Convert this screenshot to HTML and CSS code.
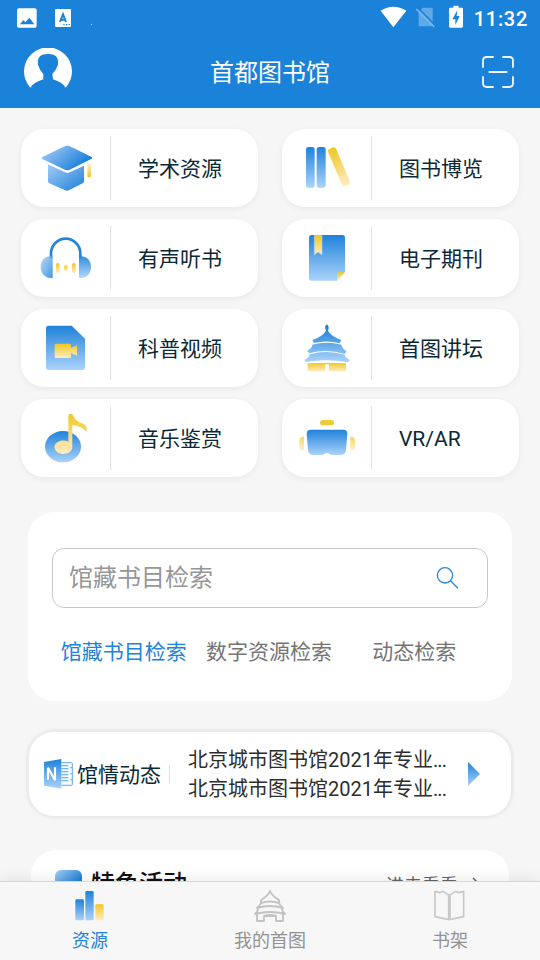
FILE: index.html
```html
<!DOCTYPE html>
<html lang="zh-CN">
<head>
<meta charset="utf-8">
<title>首都图书馆</title>
<link rel="stylesheet" href="styles.css">
</head>
<body>
<svg class="defs" width="0" height="0" aria-hidden="true">
  <defs>
    <linearGradient id="blue" x1="0" y1="0" x2="0" y2="1"><stop offset="0" stop-color="#1f82d9"/><stop offset="1" stop-color="#aad3fb"/></linearGradient>
    <linearGradient id="blueDiag" x1="0" y1="0" x2="1" y2="1"><stop offset="0" stop-color="#a3ccf6"/><stop offset="1" stop-color="#1c80d9"/></linearGradient>
    <linearGradient id="capTop" gradientUnits="userSpaceOnUse" x1="125" y1="85" x2="190" y2="160"><stop offset="0" stop-color="#8fc0f3"/><stop offset="1" stop-color="#1c80d9"/></linearGradient>
    <linearGradient id="gold" x1="0" y1="0" x2="0" y2="1"><stop offset="0" stop-color="#f0c722"/><stop offset="1" stop-color="#ffebc4"/></linearGradient>
    <linearGradient id="goldUp" x1="0" y1="0" x2="0" y2="1"><stop offset="0" stop-color="#fff0cf"/><stop offset="1" stop-color="#edc62c"/></linearGradient>
    <linearGradient id="temple" gradientUnits="userSpaceOnUse" x1="0" y1="85" x2="0" y2="190"><stop offset="0" stop-color="#1f82d9"/><stop offset="1" stop-color="#b2d7fb"/></linearGradient>
  </defs>
</svg>

<div class="app">
  <header class="header">
    <div class="status">
      <svg class="status-left" width="80" height="22" viewBox="48 21 240 66">
        <rect x="51" y="25" width="59" height="58" rx="6" fill="#fff"/>
        <path d="M60 73 70 60 76 67 88 53 103 73Z" fill="#1b82da"/>
        <rect x="165" y="27" width="48" height="54" rx="3" fill="#fff"/>
        <path d="M180 66 189 43 198 66M183 59H195" fill="none" stroke="#1b82da" stroke-width="6"/>
        <path d="M190 74h4M198 74h4M206 74h4" stroke="#1b82da" stroke-width="4"/>
        <circle cx="275" cy="73" r="2" fill="#b8dcf7"/>
      </svg>
      <svg class="status-right" width="84" height="24" viewBox="330 16 252 72">
        <path d="M332 33Q370 9 409 33L370 83Z" fill="#fff"/>
        <path d="M458 24H485Q488 24 488 28V80H446V38Z" fill="#5fa9e6"/>
        <path d="M443 24 498 79" stroke="#1b82da" stroke-width="5"/>
        <path d="M439 28 493 82" stroke="#7cb8ea" stroke-width="4.500"/>
        <path d="M540 24H550V18H566V24H576Q579 24 579 28V80Q579 84 575 84H541Q537 84 537 80V28Q537 24 540 24Z" fill="#fff"/>
        <path d="M562 32 547 59H556V76L569 49H560Z" fill="#1b82da"/>
      </svg>
      <span class="clock">11:32</span>
    </div>
    <div class="title-bar">
      <svg width="48" height="48" viewBox="72 144 144 144">
        <path d="M91 263A72 72 0 1 1 197 263Q187 247 159 238L157 222Q168 211 174 194C176 175 170 162 144 162S112 175 114 194Q119 211 130 222V238Q101 247 91 263Z" fill="#fff"/>
      </svg>
      <h1>首都图书馆</h1>
      <svg width="34" height="34" viewBox="633 165 102 102" fill="none" stroke="#eef8ff" stroke-width="5.500" stroke-linecap="round">
        <path d="M639 201V182Q639 171 650 171H669M699 171H718Q729 171 729 182V201M729 231V250Q729 261 718 261H699M669 261H650Q639 261 639 250V231M658 216H710"/>
      </svg>
    </div>
  </header>

  <main class="content">
    <nav class="grid">
      <a class="tile">
        <svg class="tile-icon" viewBox="33 27 267 234">
          <path d="M97 111 166 78Q172 75 178 78L245 111Q248 113 245 116L179 149Q172 153 165 149L97 117Q94 114 97 111Z" fill="url(#capTop)"/>
          <path d="M114 133 165 157Q172 161 179 157L222 137V184Q222 188 218 190L178 210Q171 214 164 210L118 190Q114 188 114 184Z" fill="url(#blueDiag)"/>
          <rect x="232" y="130" width="11" height="42" rx="5" fill="url(#goldUp)"/>
        </svg>
        <span class="tile-label">学术资源</span>
      </a>
      <a class="tile">
        <svg class="tile-icon" viewBox="36 27 267 234">
          <rect x="108" y="81" width="26" height="122" rx="8" fill="url(#blue)"/>
          <rect x="140" y="81" width="27" height="122" rx="8" fill="url(#blue)"/>
          <rect x="194" y="80" width="26" height="121" rx="8" fill="url(#gold)" transform="rotate(-23 207 140)"/>
        </svg>
        <span class="tile-label">图书博览</span>
      </a>
      <a class="tile">
        <svg class="tile-icon" viewBox="33 297 267 234">
          <path d="M123 415V400A44 44 0 0 1 211 400V415" fill="none" stroke="#2583d8" stroke-width="8"/>
          <path d="M128 409V474H123C103 474 92 459 92 441S103 409 123 409Z" fill="url(#blueDiag)" opacity=".8"/>
          <path d="M207 409V474H212C232 474 243 459 243 441S232 409 212 409Z" fill="url(#blue)" opacity=".9"/>
          <rect x="138" y="429" width="11" height="30" rx="5" fill="url(#gold)"/>
          <rect x="162" y="436" width="11" height="17" rx="5" fill="url(#gold)"/>
          <rect x="186" y="429" width="11" height="30" rx="5" fill="url(#gold)"/>
        </svg>
        <span class="tile-label">有声听书</span>
      </a>
      <a class="tile">
        <svg class="tile-icon" viewBox="36 297 267 234">
          <path d="M125 345H217Q225 345 225 353V456L201 482H125Q117 482 117 474V353Q117 345 125 345Z" fill="url(#blue)"/>
          <path d="M133 346H156V404L144 396 133 404Z" fill="url(#gold)" stroke="#b5d8f7" stroke-width="1.500"/>
          <path d="M202 457H225L202 481Z" fill="url(#gold)"/>
        </svg>
        <span class="tile-label">电子期刊</span>
      </a>
      <a class="tile">
        <svg class="tile-icon" viewBox="33 27 267 234">
          <path d="M116 77H185L225 116V202Q225 210 217 210H116Q108 210 108 202V85Q108 77 116 77Z" fill="url(#blue)"/>
          <path d="M138 131H179Q183 131 183 135V143L201 136V167L183 160V170Q183 174 179 174H138Q134 174 134 170V135Q134 131 138 131Z" fill="url(#gold)"/>
        </svg>
        <span class="tile-label">科普视频</span>
      </a>
      <a class="tile">
        <svg class="tile-icon" viewBox="36 27 267 234">
          <g fill="url(#temple)">
            <path d="M168 92Q163 80 168 74H173Q178 80 174 92Q181 107 214 120L209 130Q171 119 132 129L127 120Q157 110 168 92Z"/>
            <path d="M127 134Q170 122 214 134Q215 143 230 154L224 162Q171 145 118 160L111 153Q127 144 127 134Z"/>
            <path d="M119 163Q171 149 224 164Q225 172 240 180L234 187Q171 175 108 186L103 180Q118 173 119 163Z"/>
          </g>
          <path d="M113 190Q171 186 228 190V214H177V193H166V214H113Z" fill="url(#gold)"/>
        </svg>
        <span class="tile-label">首图讲坛</span>
      </a>
      <a class="tile">
        <svg class="tile-icon" viewBox="33 297 267 234">
          <ellipse cx="159" cy="440" rx="54" ry="47" fill="url(#blue)"/>
          <path d="M175 350Q175 341 182 341Q188 341 191 350Q198 364 217 370Q233 376 230 396Q214 378 187 375V442A27 20 0 1 1 175 425Z" fill="url(#gold)"/>
        </svg>
        <span class="tile-label">音乐鉴赏</span>
      </a>
      <a class="tile">
        <svg class="tile-icon" viewBox="36 297 267 234">
          <rect x="150" y="360" width="42" height="16" rx="8" fill="#eccb3c"/>
          <path d="M122 389H220Q232 389 232 401L228 450Q226 465 211 465H189Q182 465 178 461Q171 457 164 461Q160 465 153 465H130Q116 465 114 450L110 401Q110 389 122 389Z" fill="url(#blue)"/>
          <path d="M102 410V451Q88 452 88 444V421Q88 410 102 410Z" fill="url(#gold)" opacity=".75"/>
          <path d="M241 410Q255 410 255 421V444Q255 452 241 451Z" fill="url(#gold)" opacity=".75"/>
        </svg>
        <span class="tile-label">VR/AR</span>
      </a>
    </nav>

    <section class="search">
      <div class="search-box">
        <span>馆藏书目检索</span>
        <svg width="24" height="24" viewBox="498 198 72 72" fill="none" stroke="#2b86d8" stroke-width="4">
          <circle cx="525" cy="226" r="23"/><path d="M541 242 564 265"/>
        </svg>
      </div>
      <div class="search-tabs">
        <span class="search-tab active">馆藏书目检索</span>
        <span class="search-tab">数字资源检索</span>
        <span class="search-tab">动态检索</span>
      </div>
    </section>

    <section class="news">
      <svg width="30" height="30" viewBox="102 119 90 90">
        <path d="M154 130H184Q187 130 187 133V195Q187 198 184 198H154" fill="#f4faff" stroke="#66a9e6" stroke-width="3"/>
        <path d="M154 139H175M154 148H175M154 157H175M154 166H175M154 175H175M154 184H175M181 145H189M181 163H189M181 181H189" stroke="#73b4ee" stroke-width="3.500"/>
        <path d="M102 128 154 119V208L102 199Z" fill="url(#blue)"/>
        <path d="M114 181V145L135 183V144" fill="none" stroke="#fff" stroke-width="6.500"/>
      </svg>
      <h2>馆情动态</h2>
      <div class="news-list">
        <p>北京城市图书馆2021年专业<span class="dots">...</span></p>
        <p>北京城市图书馆2021年专业<span class="dots">...</span></p>
      </div>
      <svg width="12" height="24" viewBox="0 0 12 24"><path d="M0 0 12 12 0 24Z" fill="url(#blue)"/></svg>
    </section>

    <section class="events">
      <span class="events-icon"></span>
      <h2>特色活动</h2>
      <span class="events-more">进去看看</span>
      <svg width="8" height="14" viewBox="0 0 8 14" fill="none" stroke="#666" stroke-width="1.500"><path d="M1 1 7 7 1 13"/></svg>
    </section>
  </main>

  <footer class="tabbar">
    <a class="tab active">
      <svg width="34" height="34" viewBox="219 147 102 102">
        <rect x="226" y="178" width="26" height="63" rx="4" fill="url(#blue)"/>
        <rect x="256" y="153" width="25" height="88" rx="4" fill="url(#blue)"/>
        <rect x="286" y="193" width="25" height="48" rx="4" fill="url(#gold)"/>
      </svg>
      <span>资源</span>
    </a>
    <a class="tab">
      <svg width="34" height="34" viewBox="0 0 34 34" fill="none" stroke="#c3c3c3" stroke-width="1.900" stroke-linejoin="round">
        <path d="M17 2Q15 7 8 11V14Q17 11 26 14V11Q19 7 17 2ZM8 14Q7 17 4 19Q17 15 30 19Q27 17 26 14M5 19Q5 23 2 25Q17 21 32 25Q29 23 29 19M4 25V32H11V27H23V32H30V25M11 27Q17 25 23 27"/>
      </svg>
      <span>我的首图</span>
    </a>
    <a class="tab">
      <svg width="34" height="34" viewBox="489 147 102 102" fill="none" stroke="#c8c8c8" stroke-width="5" stroke-linejoin="round">
        <path d="M538 166 519 154 509 158 495 154V230L520 235 538 239 556 235 581 230V154L567 158 557 154Z"/>
        <path d="M538 164V239" stroke-width="9"/>
      </svg>
      <span>书架</span>
    </a>
  </footer>
</div>
</body>
</html>
```

FILE: styles.css
```css
* { box-sizing: border-box; }

body {
  margin: 0;
  background: #f6f6f6;
  font-family: Roboto, "Noto Sans CJK SC", sans-serif;
  color: #0b2836;
}

h1, h2, p { margin: 0; font-weight: 400; }
svg { display: block; flex: none; }
.defs { position: absolute; }

.app {
  display: flex;
  flex-direction: column;
  width: 540px;
  height: 960px;
  overflow: hidden;
}

.header { flex: none; height: 108px; background: #1b82da; color: #fff; }

.status {
  display: flex;
  align-items: center;
  height: 36px;
  padding: 0 13px 0 16px;
}
.status-right { margin-left: auto; margin-right: 10px; margin-top: -2px; }
.clock { font-size: 20px; font-weight: 500; letter-spacing: 0.7px; line-height: 36px; margin-right: -1px; padding-top: 2px; }

.title-bar {
  display: flex;
  align-items: center;
  justify-content: space-between;
  height: 72px;
  padding: 0 25px 0 24px;
}
.title-bar h1 { font-size: 24px; line-height: 36px; padding-top: 2px; margin-left: -13px; }

.content {
  flex: 1;
  min-height: 0;
  overflow: hidden;
  padding: 21px 21px 0;
}

.grid {
  display: grid;
  grid-template-columns: 237px 237px;
  column-gap: 24px;
  row-gap: 12px;
}
.tile {
  display: flex;
  align-items: center;
  height: 78px;
  border-radius: 23px;
  background: #fff;
  box-shadow: 0 2px 6px rgba(0, 0, 0, 0.06);
}
.tile-icon { width: 89px; height: 78px; }
.tile-label {
  flex: 1;
  height: 64px;
  padding-left: 27px;
  border-left: 1px solid #e1e1e1;
  font-size: 21px;
  line-height: 66px;
}

.search {
  height: 189px;
  margin: 35px 7px 0;
  padding: 36px 24px 0;
  border-radius: 26px;
  background: #fff;
}
.search-box {
  display: flex;
  align-items: center;
  justify-content: space-between;
  height: 60px;
  padding: 0 27px 0 16px;
  border: 1px solid #c8c8c8;
  border-radius: 12px;
  color: #969696;
  font-size: 24px;
}
.search-box span { line-height: 36px; padding-bottom: 1px; }
.search-tabs {
  display: grid;
  grid-template-columns: repeat(3, 1fr);
  margin: 28px 1px 0 -1px;
  text-align: center;
  font-size: 21px;
  line-height: 32px;
  color: #757575;
}
.search-tab.active { color: #2483d9; }

.news {
  display: flex;
  align-items: center;
  height: 84px;
  margin: 31px 8px 0;
  padding: 0 31px 0 15px;
  border-radius: 25px;
  background: #fff;
  box-shadow: 0 0 2px 3px #ebebeb;
}
.news h2 {
  margin-left: 3px;
  font-size: 21px;
  line-height: 16px;
  width: 93px;
  padding-top: 1px;
  border-right: 1px solid #ddd;
}
.news-list { flex: 1; padding: 2px 0 0 18px; font-size: 20px; line-height: 29px; color: #2d2d2d; white-space: nowrap; }
.dots { letter-spacing: -0.9px; }

.events {
  display: flex;
  align-items: flex-start;
  height: 120px;
  margin: 34px 10px 0;
  padding: 14px 29px 0 24px;
  border-radius: 25px;
  background: #fff;
  color: #111;
}
.events-icon { width: 27px; height: 27px; margin-top: 6px; border-radius: 6px; background: linear-gradient(135deg, #a5cff6, #2182d9 65%); }
.events h2 { margin-left: 9px; padding-top: 2px; font-size: 24px; font-weight: 500; line-height: 36px; }
.events-more { margin-left: auto; padding-top: 8px; font-size: 18px; line-height: 28px; color: #666; }
.events svg { margin: 13px 0 0 14px; }

.tabbar {
  display: grid;
  grid-template-columns: repeat(3, 1fr);
  flex: none;
  height: 79px;
  border-top: 1px solid #d6d6d6;
  background: #f7f7f7;
  box-shadow: 0 -3px 12px rgba(0, 0, 0, 0.07);
  position: relative;
}
.tab {
  display: flex;
  flex-direction: column;
  align-items: center;
  padding-top: 7px;
  font-size: 18px;
  line-height: 28px;
  color: #929292;
}
.tab svg { margin-bottom: 4px; }
.tab.active { color: #2483d9; }
```
